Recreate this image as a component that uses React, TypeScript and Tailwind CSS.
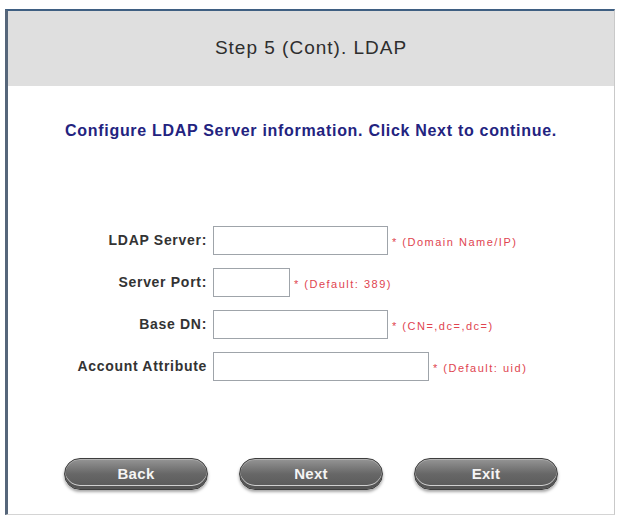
const fields = [
  { label: "LDAP Server:", width: "w-[175px]", hint: "* (Domain Name/IP)" },
  { label: "Server Port:", width: "w-[77px]", hint: "* (Default: 389)" },
  { label: "Base DN:", width: "w-[175px]", hint: "* (CN=,dc=,dc=)" },
  { label: "Account Attribute", width: "w-[216px]", hint: "* (Default: uid)" },
];

function WizardButton({ children }: { children: string }) {
  return (
    <button
      type="button"
      className="h-[32px] w-[144px] rounded-full border border-[#3e3e3e] bg-linear-to-b from-[#959595] via-[#676767] to-[#585858] text-[15px] font-bold tracking-[0.3px] text-[#f4f4f4] shadow-[inset_0_-3px_0_#555555,inset_0_-4px_0_#cfcfcf,inset_0_1px_0_#b0b0b0,0_2px_3px_rgba(0,0,0,0.35)]"
    >
      {children}
    </button>
  );
}

export default function App() {
  return (
    <main className="min-h-[518px] w-[618px] bg-white pl-[5px] pt-[9px] font-['Liberation_Sans',Arial,sans-serif]">
      <section className="flex h-[506px] w-[610px] flex-col border-b border-l-[3px] border-r border-t-2 border-b-[#d4d4d4] border-l-[#56667a] border-r-[#c9c9c9] border-t-[#3f5f82] bg-white">
        <header className="flex h-[75px] shrink-0 items-center justify-center bg-[#dfdfdf]">
          <h1 className="text-[19px] tracking-[1px] text-[#2e2e2e]">Step 5 (Cont). LDAP</h1>
        </header>

        <p className="mt-[35px] text-center text-[16px] leading-[20px] font-bold tracking-[0.7px] text-[#23237f]">
          Configure LDAP Server information. Click Next to continue.
        </p>

        <form className="ml-[59px] mt-[85px] flex flex-col gap-[13px]">
          {fields.map((f) => (
            <div key={f.label} className="flex items-center">
              <span className="w-[146px] pr-[6px] text-right text-[14px] font-bold tracking-[0.7px] text-[#333]">
                {f.label}
              </span>
              <input
                className={`h-[29px] ${f.width} border border-[#9fa4aa] bg-white`}
                type="text"
              />
              <span className="ml-[4px] mt-[3px] text-[11px] tracking-[1.5px] text-[#e04450]">
                {f.hint}
              </span>
            </div>
          ))}
        </form>

        <div className="mt-[77px] flex justify-center gap-[31px]">
          <WizardButton>Back</WizardButton>
          <WizardButton>Next</WizardButton>
          <WizardButton>Exit</WizardButton>
        </div>
      </section>
    </main>
  );
}
